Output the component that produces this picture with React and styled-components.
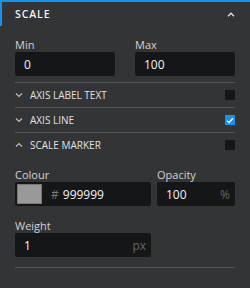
import React from 'react';
import styled, { createGlobalStyle } from 'styled-components';

const Global = createGlobalStyle`
  html, body {
    margin: 0;
    background: #333436;
  }
  body {
    font-family: "Open Sans", "Noto Sans", sans-serif;
    color: #e6e6e6;
  }
`;

const Panel = styled.div`
  width: 250px;
  height: 288px;
  background: #333436;
  border-top: 2px solid #1591ee;
  box-sizing: border-box;
`;

const Header = styled.div`
  height: 24px;
  display: flex;
  align-items: center;
  justify-content: space-between;
  border-left: 2px solid #1591ee;
  padding: 0 15px 0 13px;
  font-size: 10.5px;
  font-weight: 600;
  letter-spacing: 0.9px;
  color: #f2f2f2;
`;

const Body = styled.div`
  padding: 12px 15px 0;
`;

const Grid = styled.div`
  display: grid;
  grid-template-columns: ${p => p.cols || '1fr 1fr'};
  column-gap: ${p => p.gap || 20}px;
  margin-bottom: ${p => p.mb || 0}px;
`;

const Field = styled.div`
  display: flex;
  flex-direction: column;
`;

const Label = styled.div`
  font-size: 11px;
  line-height: 14px;
  color: #d2d2d2;
`;

const Input = styled.div`
  height: 24px;
  background: #151618;
  border-radius: 2px;
  display: flex;
  align-items: center;
  padding: 0 5px 0 9px;
  font-size: 12px;
  color: #f4f4f4;
`;

const Value = styled.span`
  flex: 1;
`;

const Unit = styled.span`
  color: #666;
  font-size: 12px;
`;

const Swatch = styled.span`
  width: 23px;
  height: 18px;
  background: #999999;
  border: 1px solid #777;
  margin: 0 9px 0 -7px;
`;

const Hash = styled.span`
  color: #777;
  margin-right: 4px;
`;

const Divider = styled.div`
  height: 1px;
  background: #555659;
  margin-top: ${p => p.mt || 0}px;
`;

const Row = styled.div`
  height: 24px;
  display: flex;
  align-items: center;
  font-size: 10px;
  color: #e0e0e0;
`;

const Chevron = styled.svg`
  width: 8px;
  height: 6px;
  margin-right: 7px;
  flex: none;
`;

const RowLabel = styled.span`
  flex: 1;
`;

const Check = styled.span`
  width: 10px;
  height: 10px;
  background: ${p => (p.on ? '#1591ee' : '#151618')};
  display: flex;
  align-items: center;
  justify-content: center;
`;

const Sub = styled.div`
  padding-top: 11px;
`;

const Arrow = ({ up }) => (
  <Chevron viewBox="0 0 8 6">
    <path
      d={up ? 'M1 4.5 L4 1.5 L7 4.5' : 'M1 1.5 L4 4.5 L7 1.5'}
      fill="none"
      stroke="#bdbdbd"
      strokeWidth="1.2"
    />
  </Chevron>
);

const Toggle = ({ label, on, up }) => (
  <Row>
    <Arrow up={up} />
    <RowLabel>{label}</RowLabel>
    <Check on={on}>
      {on && (
        <svg width="8" height="7" viewBox="0 0 8 7">
          <path d="M1 3.8 L3 5.6 L7 1.2" fill="none" stroke="#fff" strokeWidth="1.4" />
        </svg>
      )}
    </Check>
  </Row>
);

export default function App() {
  return (
    <>
      <Global />
      <Panel>
        <Header>
          <span>SCALE</span>
          <svg width="8" height="5" viewBox="0 0 8 5">
            <path d="M1 4.2 L4 1.2 L7 4.2" fill="none" stroke="#e0e0e0" strokeWidth="1.3" />
          </svg>
        </Header>
        <Body>
          <Grid>
            <Field>
              <Label>Min</Label>
              <Input><Value>0</Value></Input>
            </Field>
            <Field>
              <Label>Max</Label>
              <Input><Value>100</Value></Input>
            </Field>
          </Grid>
          <Divider mt={6} />
          <Toggle label="AXIS LABEL TEXT" />
          <Divider />
          <Toggle label="AXIS LINE" on />
          <Divider />
          <Toggle label="SCALE MARKER" up />
          <Sub>
            <Grid cols="136px 78px" gap={6} mb={13}>
              <Field>
                <Label>Colour</Label>
                <Input>
                  <Swatch />
                  <Hash>#</Hash>
                  <Value>999999</Value>
                </Input>
              </Field>
              <Field>
                <Label>Opacity</Label>
                <Input>
                  <Value>100</Value>
                  <Unit>%</Unit>
                </Input>
              </Field>
            </Grid>
            <Grid cols="136px 78px" gap={6}>
              <Field>
                <Label>Weight</Label>
                <Input>
                  <Value>1</Value>
                  <Unit>px</Unit>
                </Input>
              </Field>
            </Grid>
            <Divider mt={10} />
          </Sub>
        </Body>
      </Panel>
    </>
  );
}
